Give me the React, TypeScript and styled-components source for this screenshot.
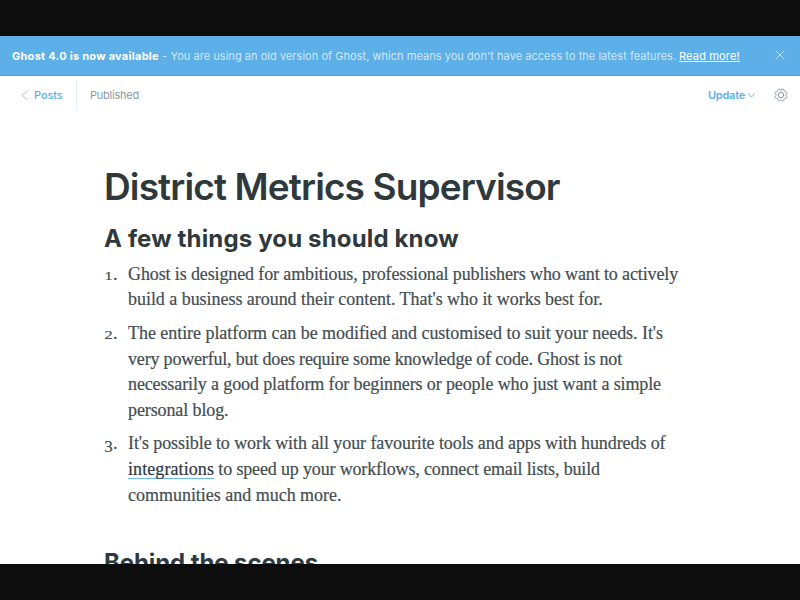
import React from 'react';
import styled, { createGlobalStyle } from 'styled-components';

const GlobalStyle = createGlobalStyle`
  * { box-sizing: border-box; }
  body { margin: 0; background: #0d0d0d; }
`;

const Screen = styled.div`
  width: 800px;
  height: 600px;
  padding: 36px 0;
  background: #0d0d0d;
  font-family: Inter, sans-serif;
`;

const Page = styled.div`
  height: 528px;
  overflow: hidden;
  background: #fff;
`;

const Banner = styled.div`
  display: flex;
  align-items: center;
  justify-content: space-between;
  height: 40px;
  padding: 0 15px 0 12px;
  background: #5dafe8;
  border-bottom: 1px solid #4a9fdf;
  color: #fff;
  font-size: 11px;
  line-height: 14px;
  white-space: pre;
`;

const BannerText = styled.div`
  display: flex;
  padding-top: 1px;
`;

const BannerTitle = styled.strong`
  width: 147px;
  font-weight: 700;
  letter-spacing: 0.26px;
`;

const BannerMessage = styled.span`
  width: 520px;
  padding-left: 3px;
  letter-spacing: 0.037px;
  color: rgba(255, 255, 255, 0.72);
`;

const Dash = styled.span`
  display: inline-block;
  width: 8.5px;
`;

const BannerLink = styled.a`
  letter-spacing: 0.17px;
  text-decoration: underline;
  text-underline-offset: 1px;
`;

const Icon = styled.svg`
  display: block;
  fill: none;
  stroke: currentColor;
  stroke-linecap: round;
  stroke-linejoin: round;
`;

const CloseIcon = styled(Icon)`
  margin-bottom: 1px;
  opacity: 0.75;
`;

const Toolbar = styled.header`
  display: flex;
  align-items: center;
  height: 38px;
  padding: 0 12px 0 21px;
  font-size: 11px;
  line-height: 14px;
`;

const BackLink = styled.a`
  display: flex;
  align-items: center;
  width: 56px;
  height: 29px;
  border-right: 1px solid #e2ecf1;
  gap: 5px;
  color: #5dafe8;
  font-weight: 500;
  letter-spacing: -0.1px;
`;

const BackIcon = styled(Icon)`
  opacity: 0.8;
`;

const Status = styled.span`
  margin-left: 13px;
  color: #8c9ba3;
  letter-spacing: -0.22px;
`;

const Actions = styled.div`
  display: flex;
  align-items: center;
  margin-left: auto;
  color: #82929b;
`;

const UpdateButton = styled.div`
  display: flex;
  align-items: center;
  gap: 3px;
  margin-right: 19px;
  color: #5dafe8;
  font-weight: 600;
  letter-spacing: -0.24px;
`;

const Article = styled.article`
  padding: 50.4px 104px 0;
  color: #2f393c;
`;

const Title = styled.h1`
  margin: 0;
  font-size: 37px;
  font-weight: 600;
  line-height: 45px;
  letter-spacing: -0.88px;
  white-space: nowrap;
`;

const Heading = styled.h2<{ $top: number; $tracking: number }>`
  margin: ${p => p.$top}px 0 0;
  font-size: 24px;
  font-weight: 700;
  line-height: 29px;
  letter-spacing: ${p => p.$tracking}px;
  white-space: nowrap;
`;

const List = styled.ol`
  display: flex;
  flex-direction: column;
  gap: 8.1px;
  margin: 8.7px 0 0;
  padding: 0;
  list-style: none;
  color: #434d50;
  font: 18px/25.6px "Liberation Serif", serif;
  -webkit-text-stroke: 0.2px currentColor;
`;

const Item = styled.li`
  display: grid;
  grid-template-columns: 24px 1fr;
`;

const Marker = styled.div`
  display: flex;
  align-items: baseline;
  align-self: start;
  justify-content: flex-end;
  padding-right: 10.5px;
`;

const Numeral = styled.span<{ $drop: number; $size: number; $stretch: number }>`
  width: 9px;
  font-size: ${p => p.$size}px;
  text-align: center;
  transform: translateY(${p => p.$drop}px) scaleX(${p => p.$stretch});
`;

const Line = styled.div<{ $tracking: number }>`
  letter-spacing: ${p => p.$tracking}px;
  white-space: nowrap;
`;

const TextLink = styled.a`
  display: inline-block;
  height: 22px;
  line-height: 25.6px;
  vertical-align: top;
  border-bottom: 1px solid #6cbcf0;
  color: #2f393c;
  letter-spacing: 0.085px;
`;

type TextLine = { text: string; tracking: number; link?: string };
type ListItem = { numeral: string; drop: number; size: number; stretch: number; lines: TextLine[] };

const items: ListItem[] = [
  {
    numeral: '1', drop: 0, size: 13, stretch: 1.25,
    lines: [
      { text: 'Ghost is designed for ambitious, professional publishers who want to actively', tracking: -0.122 },
      { text: "build a business around their content. That's who it works best for.", tracking: -0.039 },
    ],
  },
  {
    numeral: '2', drop: 0, size: 13, stretch: 1.25,
    lines: [
      { text: "The entire platform can be modified and customised to suit your needs. It's", tracking: -0.048 },
      { text: 'very powerful, but does require some knowledge of code. Ghost is not', tracking: -0.182 },
      { text: 'necessarily a good platform for beginners or people who just want a simple', tracking: -0.12 },
      { text: 'personal blog.', tracking: -0.106 },
    ],
  },
  {
    numeral: '3', drop: 3, size: 17, stretch: 1,
    lines: [
      { text: "It's possible to work with all your favourite tools and apps with hundreds of", tracking: -0.093 },
      { link: 'integrations', text: ' to speed up your workflows, connect email lists, build', tracking: -0.156 },
      { text: 'communities and much more.', tracking: -0.017 },
    ],
  },
];

const cog = Array.from({ length: 65 }, (_, i) => {
  const a = (i / 64) * Math.PI * 2;
  const r = 5.7 + 0.65 * Math.tanh(2.2 * Math.cos(a * 8 + Math.PI));
  return `${i ? 'L' : 'M'}${(7 + r * Math.sin(a)).toFixed(2)} ${(7 - r * Math.cos(a)).toFixed(2)}`;
}).join('') + 'Z';

export default function App() {
  return (
    <Screen>
      <GlobalStyle />
      <Page>
        <Banner>
          <BannerText>
            <BannerTitle>Ghost 4.0 is now available</BannerTitle>
            <BannerMessage>
              <Dash>-</Dash>You are using an old version of Ghost, which means you don't have access to the latest features.
            </BannerMessage>
            <BannerLink>Read more!</BannerLink>
          </BannerText>
          <CloseIcon width="10" height="10" viewBox="0 0 10 10" strokeWidth="0.8">
            <path d="M1 1l8 8M9 1L1 9" />
          </CloseIcon>
        </Banner>
        <Toolbar>
          <BackLink>
            <BackIcon width="8" height="11" viewBox="0 0 8 11" strokeWidth="0.8">
              <path d="M6.5 1L1.2 5.5l5.3 4.5" />
            </BackIcon>
            Posts
          </BackLink>
          <Status>Published</Status>
          <Actions>
            <UpdateButton>
              Update
              <Icon width="7" height="5" viewBox="0 0 7 5" strokeWidth="0.9">
                <path d="M0.6 0.7l2.9 3.5 2.9-3.5" />
              </Icon>
            </UpdateButton>
            <Icon width="14" height="14" viewBox="0 0 14 14" strokeWidth="0.9">
              <path d={cog} />
              <circle cx="7" cy="7" r="2.7" />
            </Icon>
          </Actions>
        </Toolbar>
        <Article>
          <Title>District Metrics Supervisor</Title>
          <Heading $top={14.6} $tracking={0.15}>A few things you should know</Heading>
          <List>
            {items.map(item => (
              <Item key={item.numeral}>
                <Marker>
                  <Numeral $drop={item.drop} $size={item.size} $stretch={item.stretch}>{item.numeral}</Numeral>.
                </Marker>
                <div>
                  {item.lines.map(line => (
                    <Line key={line.text} $tracking={line.tracking}>
                      {line.link && <TextLink>{line.link}</TextLink>}
                      {line.text}
                    </Line>
                  ))}
                </div>
              </Item>
            ))}
          </List>
          <Heading $top={40.1} $tracking={-0.1}>Behind the scenes</Heading>
        </Article>
      </Page>
    </Screen>
  );
}
